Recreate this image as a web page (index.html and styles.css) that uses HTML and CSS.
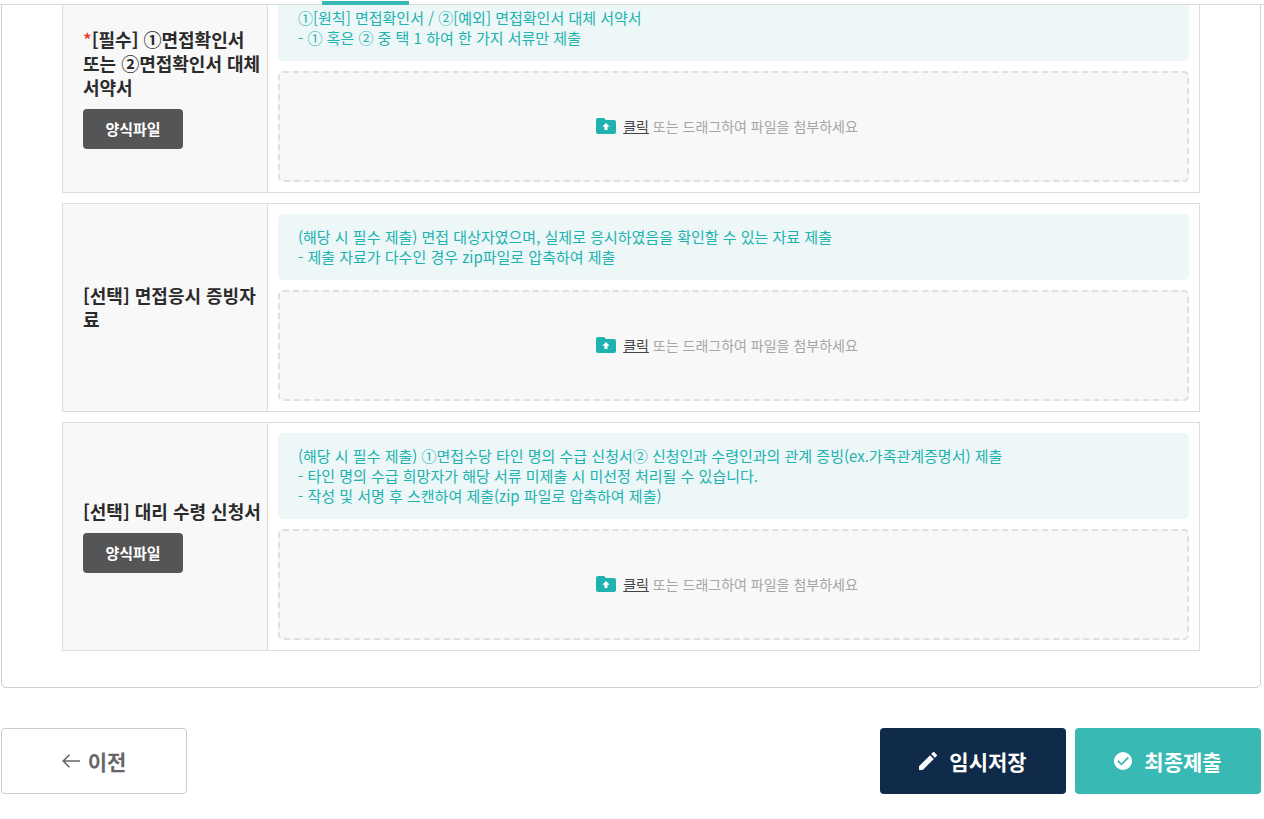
FILE: index.html
```html
<!DOCTYPE html>
<html lang="ko">
<head>
<meta charset="utf-8">
<meta name="viewport" content="width=device-width, initial-scale=1">
<title>면접수당 신청</title>
<link rel="stylesheet" href="styles.css">
</head>
<body>
<svg class="sprite" aria-hidden="true">
  <symbol id="folder" viewBox="0 0 20 16"><path fill="#20b2ae" d="M2 0h6l2 2h8a2 2 0 0 1 2 2v10a2 2 0 0 1-2 2H2a2 2 0 0 1-2-2V2a2 2 0 0 1 2-2z"/><path fill="#fff" d="M10 5l3.7 3.8h-2.2V12h-3V8.800H6.300z"/></symbol>
</svg>
<header class="topbar"><span class="topbar-mark"></span></header>
<main class="page">
  <form class="form">
    <div class="card">
      <section class="row">
        <div class="row-head">
          <h2 class="row-title"><span class="required">*</span>[필수] ①면접확인서 또는 ②면접확인서 대체 서약서</h2>
          <button type="button" class="btn-file">양식파일</button>
        </div>
        <div class="row-body">
          <p class="guide">①[원칙] 면접확인서 / ②[예외] 면접확인서 대체 서약서<br>- ① 혹은 ② 중 택 1 하여 한 가지 서류만 제출</p>
          <label class="drop"><input class="drop-input" type="file"><svg class="drop-icon" aria-hidden="true"><use href="#folder"/></svg><span><span class="drop-link">클릭</span> 또는 드래그하여 파일을 첨부하세요</span></label>
        </div>
      </section>
      <section class="row">
        <div class="row-head">
          <h2 class="row-title">[선택] 면접응시 증빙자료</h2>
        </div>
        <div class="row-body">
          <p class="guide">(해당 시 필수 제출) 면접 대상자였으며, 실제로 응시하였음을 확인할 수 있는 자료 제출<br>- 제출 자료가 다수인 경우 zip파일로 압축하여 제출</p>
          <label class="drop"><input class="drop-input" type="file"><svg class="drop-icon" aria-hidden="true"><use href="#folder"/></svg><span><span class="drop-link">클릭</span> 또는 드래그하여 파일을 첨부하세요</span></label>
        </div>
      </section>
      <section class="row">
        <div class="row-head">
          <h2 class="row-title">[선택] 대리 수령 신청서</h2>
          <button type="button" class="btn-file">양식파일</button>
        </div>
        <div class="row-body">
          <p class="guide">(해당 시 필수 제출) ①면접수당 타인 명의 수급 신청서② 신청인과 수령인과의 관계 증빙(ex.가족관계증명서) 제출<br>- 타인 명의 수급 희망자가 해당 서류 미제출 시 미선정 처리될 수 있습니다.<br>- 작성 및 서명 후 스캔하여 제출(zip 파일로 압축하여 제출)</p>
          <label class="drop"><input class="drop-input" type="file"><svg class="drop-icon" aria-hidden="true"><use href="#folder"/></svg><span><span class="drop-link">클릭</span> 또는 드래그하여 파일을 첨부하세요</span></label>
        </div>
      </section>
    </div>
    <div class="actions">
      <button type="button" class="btn btn-prev"><svg class="btn-icon" viewBox="0 0 18 18" aria-hidden="true"><path fill="none" stroke="#666" stroke-width="1.6" d="M18 9H1.200M7.500 2.700L1.200 9l6.300 6.300"/></svg>이전</button>
      <div class="actions-end">
        <button type="button" class="btn btn-save"><svg class="btn-icon" viewBox="3 3 18 18" aria-hidden="true"><path fill="#fff" d="M3 17.250V21h3.750L17.810 9.940l-3.750-3.750L3 17.250zM20.710 7.040a1 1 0 0 0 0-1.410l-2.340-2.340a1 1 0 0 0-1.410 0l-1.830 1.830 3.750 3.750 1.830-1.830z"/></svg>임시저장</button>
        <button type="submit" class="btn btn-submit"><svg class="btn-icon" viewBox="0 0 18 18" aria-hidden="true"><circle cx="9" cy="9" r="9" fill="#fff"/><path fill="none" stroke="#38b9b3" stroke-width="1.700" d="M3.900 8.900l3.500 3.500 7-7"/></svg>최종제출</button>
      </div>
    </div>
  </form>
</main>
</body>
</html>
```
FILE: styles.css
```css
* {
  box-sizing: border-box;
}

body {
  margin: 0;
  background: #fff;
  color: #2b2b2b;
  font-family: "Noto Sans CJK KR", "Noto Sans", sans-serif;
}

button {
  font-family: inherit;
  cursor: pointer;
}

.sprite {
  display: none;
}

/* Sticky bar with the marker of the current step */
.topbar {
  position: sticky;
  top: 0;
  z-index: 2;
  display: flex;
  height: 5px;
  padding: 1px 0 0 322px;
  border-bottom: 1px solid #ddd;
  background: #fff;
}

.topbar-mark {
  flex: none;
  width: 87px;
  height: 4px;
  background: #38b9b3;
}

/* The upper part of the card sits under the bar */
.page {
  margin-top: -82px;
  padding: 0 3px 24px 1px;
}

.card {
  display: flex;
  flex-direction: column;
  gap: 10px;
  padding: 60px 60px 36px;
  border: 1px solid #d0d0d0;
  border-radius: 5px;
}

.row {
  display: flex;
  border: 1px solid #ddd;
}

.row-head {
  flex: none;
  display: flex;
  flex-direction: column;
  justify-content: center;
  align-items: flex-start;
  gap: 10px;
  width: 205px;
  padding: 0 5px 2px 20px;
  border-right: 1px solid #ddd;
  background: #f8f8f8;
}

.row-title {
  margin: 0;
  font-size: 18px;
  font-weight: 700;
  line-height: 24px;
}

.required {
  color: #f03030;
  font-weight: 500;
}

.btn-file {
  width: 100px;
  height: 40px;
  padding: 0;
  border: 0;
  border-radius: 4px;
  background: #555;
  color: #fff;
  font-size: 15px;
  font-weight: 700;
}

.row-body {
  flex: 1;
  display: flex;
  flex-direction: column;
  gap: 10px;
  min-width: 0;
  padding: 10px;
}

.guide {
  margin: 0;
  padding: 13px 20px;
  border-radius: 5px;
  background: #edf7f8;
  color: #20b2ae;
  font-size: 15px;
  line-height: 20px;
}

.drop {
  display: flex;
  justify-content: center;
  align-items: center;
  gap: 7px;
  height: 111px;
  padding: 0 13px 1px 0;
  border: 2px dashed #e0e0e0;
  border-radius: 5px;
  background: #f8f8f8;
  color: #a5a5a5;
  font-size: 14px;
  line-height: 20px;
  cursor: pointer;
}

.drop-input {
  position: absolute;
  width: 1px;
  height: 1px;
  opacity: 0;
}

.drop-icon {
  width: 20px;
  height: 16px;
}

.drop-link {
  color: #444;
  text-decoration: underline;
}

.actions {
  display: flex;
  justify-content: space-between;
  margin-top: 40px;
}

.actions-end {
  display: flex;
  gap: 9px;
}

.btn {
  display: flex;
  justify-content: center;
  align-items: center;
  gap: 12px;
  width: 186px;
  height: 66px;
  padding: 0;
  border: 0;
  border-radius: 4px;
  color: #fff;
  font-size: 21px;
  font-weight: 700;
}

.btn-icon {
  width: 18px;
  height: 18px;
}

.btn-prev {
  gap: 8px;
  border: 1px solid #ccc;
  background: #fff;
  color: #666;
}

.btn-save {
  background: #0f2b49;
}

.btn-submit {
  background: #38b9b3;
}
```
